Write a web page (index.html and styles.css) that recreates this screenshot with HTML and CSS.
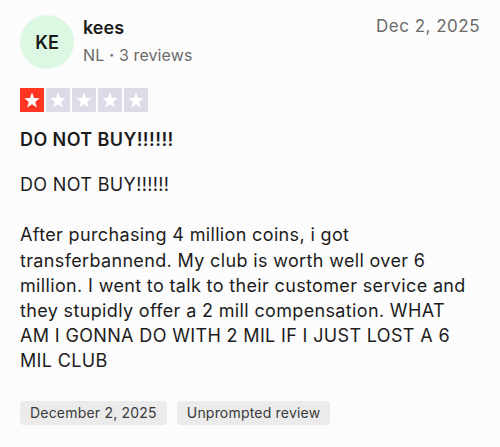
FILE: index.html
```html
<!DOCTYPE html>
<html lang="en">
<head>
    <meta charset="UTF-8">
    <meta name="viewport" content="width=device-width, initial-scale=1.0">
    <title>Review</title>
    <link rel="stylesheet" href="styles.css">
</head>
<body>
    <div class="review">
        <div class="header">
            <div class="avatar">KE</div>
            <div class="consumer">
                <span class="name">kees</span>
                <span class="meta">NL <b class="dot">&middot;</b> 3 reviews</span>
            </div>
            <time class="date">Dec 2, 2025</time>
        </div>

        <div class="stars">
            <span class="star filled">
                <svg viewBox="0 0 24 24"><path d="M12 4.6L14 10.05 19.8 10.27 15.23 13.85 16.82 19.43 12 16.2 7.18 19.43 8.77 13.85 4.2 10.27 10 10.05z"/></svg>
            </span>
            <span class="star">
                <svg viewBox="0 0 24 24"><path d="M12 4.6L14 10.05 19.8 10.27 15.23 13.85 16.82 19.43 12 16.2 7.18 19.43 8.77 13.85 4.2 10.27 10 10.05z"/></svg>
            </span>
            <span class="star">
                <svg viewBox="0 0 24 24"><path d="M12 4.6L14 10.05 19.8 10.27 15.23 13.85 16.82 19.43 12 16.2 7.18 19.43 8.77 13.85 4.2 10.27 10 10.05z"/></svg>
            </span>
            <span class="star">
                <svg viewBox="0 0 24 24"><path d="M12 4.6L14 10.05 19.8 10.27 15.23 13.85 16.82 19.43 12 16.2 7.18 19.43 8.77 13.85 4.2 10.27 10 10.05z"/></svg>
            </span>
            <span class="star">
                <svg viewBox="0 0 24 24"><path d="M12 4.6L14 10.05 19.8 10.27 15.23 13.85 16.82 19.43 12 16.2 7.18 19.43 8.77 13.85 4.2 10.27 10 10.05z"/></svg>
            </span>
        </div>

        <h2 class="title">DO NOT BUY!!!!!!</h2>
        <p class="text">DO NOT BUY!!!!!!<br><br>After purchasing 4 million coins, i got transferbannend. My club is worth well over 6 million. I went to talk to their customer service and they stupidly offer a 2 mill compensation. WHAT AM I GONNA DO WITH 2 MIL IF I JUST LOST A 6 MIL CLUB</p>

        <div class="tags">
            <span class="tag">December 2, 2025</span>
            <span class="tag">Unprompted review</span>
        </div>
    </div>
</body>
</html>
```

FILE: styles.css
```css
body {
    margin: 0;
    background-color: #fcfcfc;
    font-family: Inter, "Noto Sans", sans-serif;
    color: #1c1c1c;
}
.review {
    padding: 15px 20px 0 20px;
}
.header {
    display: flex;
    align-items: flex-start;
}
.avatar {
    width: 54px;
    height: 54px;
    border-radius: 50%;
    background-color: #dcf8e3;
    display: flex;
    align-items: center;
    justify-content: center;
    font-size: 18px;
    font-weight: 600;
    color: #1a1a1a;
    flex-shrink: 0;
}
.consumer {
    display: flex;
    flex-direction: column;
    margin-left: 9px;
    flex: 1;
}
.name {
    font-size: 18px;
    font-weight: 600;
    line-height: 24px;
    margin-top: 1px;
}
.meta {
    font-size: 16px;
    line-height: 22px;
    letter-spacing: 0.1px;
    color: #6b6b6b;
    margin-top: 4px;
}
.dot {
    font-weight: 700;
}
.date {
    font-size: 17px;
    letter-spacing: 0.5px;
    color: #6b6b6b;
    line-height: 22px;
    margin-top: 0;
}
.stars {
    display: flex;
    gap: 2px;
    margin-top: 19px;
}
.star {
    width: 24px;
    height: 24px;
    background-color: #dcdce6;
    display: block;
}
.star.filled {
    background-color: #ff3722;
}
.star svg {
    display: block;
    width: 24px;
    height: 24px;
    fill: white;
}
.title {
    font-size: 18px;
    font-weight: 600;
    letter-spacing: 0.4px;
    line-height: 25px;
    margin: 15px 0 0 0;
}
.text {
    font-size: 18px;
    letter-spacing: 0.35px;
    line-height: 25.2px;
    margin: 20px 0 0 0;
    max-width: 456px;
}
.tags {
    display: flex;
    gap: 10px;
    margin-top: 27px;
}
.tag {
    background-color: #ebebeb;
    border-radius: 4px;
    padding: 2px 10px;
    font-size: 14px;
    letter-spacing: 0.2px;
    line-height: 20px;
    color: #3a3a3a;
}
```
